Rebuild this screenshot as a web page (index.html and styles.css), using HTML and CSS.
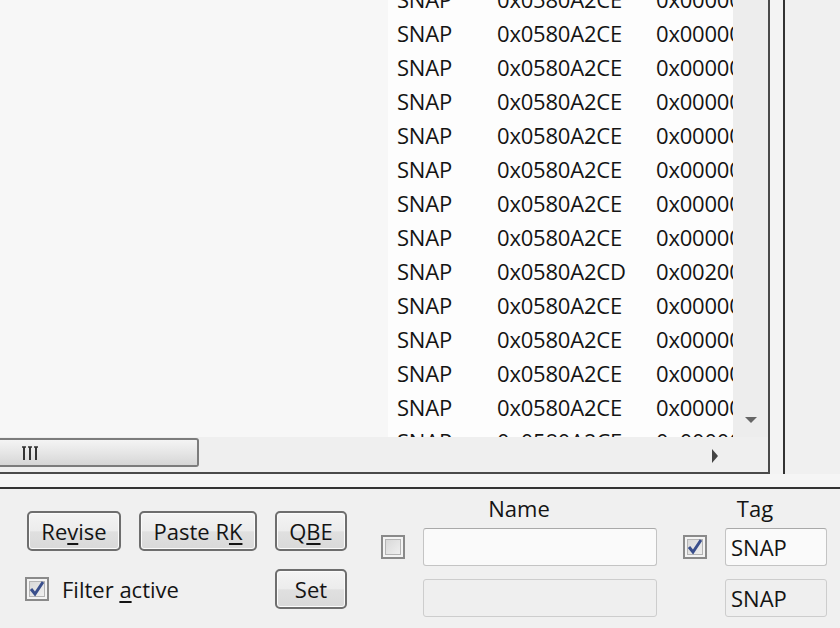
FILE: index.html
```html
<!DOCTYPE html>
<html lang="en">
<head>
    <meta charset="UTF-8">
    <title>Snapshot list</title>
    <link rel="stylesheet" href="styles.css">
</head>
<body>
    <div class="top">
        <div class="frame">
            <div class="view">
                <div class="blank"></div>
                <div class="list">
                    <div class="rows">
                        <div class="row"><span class="c1">SNAP</span><span class="c2">0x0580A2CE</span><span class="c3">0x00000000</span></div>
                        <div class="row"><span class="c1">SNAP</span><span class="c2">0x0580A2CE</span><span class="c3">0x00000000</span></div>
                        <div class="row"><span class="c1">SNAP</span><span class="c2">0x0580A2CE</span><span class="c3">0x00000000</span></div>
                        <div class="row"><span class="c1">SNAP</span><span class="c2">0x0580A2CE</span><span class="c3">0x00000000</span></div>
                        <div class="row"><span class="c1">SNAP</span><span class="c2">0x0580A2CE</span><span class="c3">0x00000000</span></div>
                        <div class="row"><span class="c1">SNAP</span><span class="c2">0x0580A2CE</span><span class="c3">0x00000000</span></div>
                        <div class="row"><span class="c1">SNAP</span><span class="c2">0x0580A2CE</span><span class="c3">0x00000000</span></div>
                        <div class="row"><span class="c1">SNAP</span><span class="c2">0x0580A2CE</span><span class="c3">0x00000000</span></div>
                        <div class="row"><span class="c1">SNAP</span><span class="c2">0x0580A2CD</span><span class="c3">0x00200000</span></div>
                        <div class="row"><span class="c1">SNAP</span><span class="c2">0x0580A2CE</span><span class="c3">0x00000000</span></div>
                        <div class="row"><span class="c1">SNAP</span><span class="c2">0x0580A2CE</span><span class="c3">0x00000000</span></div>
                        <div class="row"><span class="c1">SNAP</span><span class="c2">0x0580A2CE</span><span class="c3">0x00000000</span></div>
                        <div class="row"><span class="c1">SNAP</span><span class="c2">0x0580A2CE</span><span class="c3">0x00000000</span></div>
                        <div class="row"><span class="c1">SNAP</span><span class="c2">0x0580A2CE</span><span class="c3">0x00000000</span></div>
                    </div>
                </div>
                <div class="vscroll"><span class="arrow-down"></span></div>
            </div>
            <div class="hscroll">
                <div class="thumb">
                    <svg class="grip" width="18" height="16" viewBox="0 0 18 16">
                        <path d="M2 2v13M8 2v13M14 2v13" stroke="#333" stroke-width="2"/>
                        <path d="M0 2h4M6 2h4M12 2h4" stroke="#333" stroke-width="1.5"/>
                    </svg>
                </div>
                <span class="arrow-right"></span>
            </div>
        </div>
        <div class="gap"></div>
        <div class="side"></div>
    </div>
    <div class="strip"></div>

    <div class="panel">
        <!-- buttons -->
        <div class="buttons">
            <button class="btn">Re<u>v</u>ise</button>
            <button class="btn">Paste R<u>K</u></button>
            <button class="btn">Q<u>B</u>E</button>
            <label class="check-row">
                <span class="check checked">
                    <svg width="16" height="16" viewBox="0 0 16 16"><path d="M2 8l4 5 8-12" fill="none" stroke="#3a4f8c" stroke-width="3"/></svg>
                </span>
                <span>Filter <u>a</u>ctive</span>
            </label>
            <button class="btn">Set</button>
        </div>

        <!-- name -->
        <div class="group name-group">
            <div class="caption">Name</div>
            <div class="line">
                <span class="check"></span>
                <div class="field"></div>
            </div>
            <div class="line">
                <span class="check-space"></span>
                <div class="field off"></div>
            </div>
        </div>

        <!-- tag -->
        <div class="group tag-group">
            <div class="caption">Tag</div>
            <div class="line">
                <span class="check checked">
                    <svg width="16" height="16" viewBox="0 0 16 16"><path d="M2 8l4 5 8-12" fill="none" stroke="#3a4f8c" stroke-width="3"/></svg>
                </span>
                <div class="field">SNAP</div>
            </div>
            <div class="line">
                <span class="check-space"></span>
                <div class="field off">SNAP</div>
            </div>
        </div>
    </div>
</body>
</html>
```

FILE: styles.css
```css
body {
    margin: 0;
    width: 840px;
    height: 628px;
    overflow: hidden;
    background-color: #f0f0f0;
    font-family: "Open Sans", Arial, sans-serif;
    font-size: 22px;
    color: #141414;
}
.top {
    display: flex;
    height: 474px;
}
.frame {
    width: 768px;
    border-right: 2px solid #4a4a4a;
    border-bottom: 2px solid #4a4a4a;
    display: flex;
    flex-direction: column;
}
.view {
    display: flex;
    height: 437px;
}
.blank {
    width: 388px;
    background-color: #f7f7f7;
}
.list {
    width: 345px;
    background-color: #fdfdfd;
    overflow: hidden;
}
.rows {
    margin-top: -18px;
}
.row {
    display: flex;
    height: 34px;
    line-height: 34px;
    white-space: nowrap;
    letter-spacing: -0.2px;
}
.c1 {
    width: 100px;
    padding-left: 9px;
    flex-shrink: 0;
}
.c2 {
    width: 159px;
    flex-shrink: 0;
}
.c3 {
    flex-shrink: 0;
}
.vscroll {
    width: 35px;
    background-color: #ededed;
    display: flex;
    flex-direction: column;
    justify-content: flex-end;
    align-items: center;
    padding-bottom: 14px;
    box-sizing: border-box;
}
.arrow-down {
    width: 0;
    height: 0;
    border-left: 6px solid transparent;
    border-right: 6px solid transparent;
    border-top: 6px solid #666;
}
.hscroll {
    height: 35px;
    display: flex;
    align-items: center;
    justify-content: space-between;
    padding-right: 50px;
    background-color: #efefef;
}
.thumb {
    align-self: flex-start;
    margin-top: 1px;
    width: 197px;
    height: 25px;
    border: 2px solid #7c7c7c;
    border-left: none;
    border-radius: 0 3px 3px 0;
    background: linear-gradient(#f4f4f4, #e6e6e6 50%, #d6d6d6);
    display: flex;
    align-items: center;
}
.grip {
    margin-left: 22px;
}
.arrow-right {
    width: 0;
    height: 0;
    margin-top: 2px;
    border-top: 7px solid transparent;
    border-bottom: 7px solid transparent;
    border-left: 6px solid #444;
}
.gap {
    width: 13px;
    background-color: #f3f3f3;
}
.side {
    flex-grow: 1;
    border-left: 2px solid #333;
    background-color: #f0f0f0;
}
.strip {
    height: 13px;
    background-color: #f5f5f5;
    border-bottom: 2px solid #333;
}
.panel {
    display: flex;
    height: 139px;
}
.buttons {
    display: grid;
    grid-template-columns: 94px 118px 72px;
    grid-template-rows: 40px 40px;
    column-gap: 18px;
    row-gap: 18px;
    margin-left: 27px;
    margin-top: 22px;
}
.btn {
    font-family: inherit;
    font-size: 22px;
    color: #141414;
    padding: 0;
    border: 2px solid #6e6e6e;
    border-radius: 5px;
    box-shadow: inset 0 0 0 1px #fbfbfb;
    background: linear-gradient(#f4f4f4, #ececec 50%, #e0e0e0 52%, #d9d9d9);
}
.buttons .btn:last-child {
    grid-column: 3;
}
u {
    text-decoration-thickness: 2px;
    text-underline-offset: 3px;
}
.check-row {
    grid-column: 1 / 3;
    display: flex;
    align-items: center;
    gap: 13px;
    margin-left: -2px;
}
.check {
    width: 20px;
    height: 20px;
    flex-shrink: 0;
    border: 2px solid #8a8a8a;
    background: linear-gradient(135deg, #d4d4d4, #f4f4f4);
    box-shadow: inset 0 0 0 2px #f4f4f4, inset 0 0 0 3px #b4b4b4;
    display: flex;
    align-items: center;
    justify-content: center;
}
.check-space {
    width: 24px;
    flex-shrink: 0;
}
.group {
    display: flex;
    flex-direction: column;
}
.name-group {
    margin-left: 34px;
    width: 276px;
}
.tag-group {
    margin-left: 26px;
    width: 144px;
}
.caption {
    height: 40px;
    line-height: 40px;
    text-align: center;
    margin-top: -1px;
}
.line {
    display: flex;
    align-items: center;
    gap: 18px;
    margin-bottom: 13px;
}
.field {
    flex-grow: 1;
    height: 36px;
    line-height: 36px;
    padding-left: 5px;
    border: 1px solid #c4c4c4;
    border-top-color: #a9a9a9;
    border-radius: 3px;
    background-color: #fafafa;
}
.field.off {
    background-color: #efefef;
    border-color: #cdcdcd;
}
```
